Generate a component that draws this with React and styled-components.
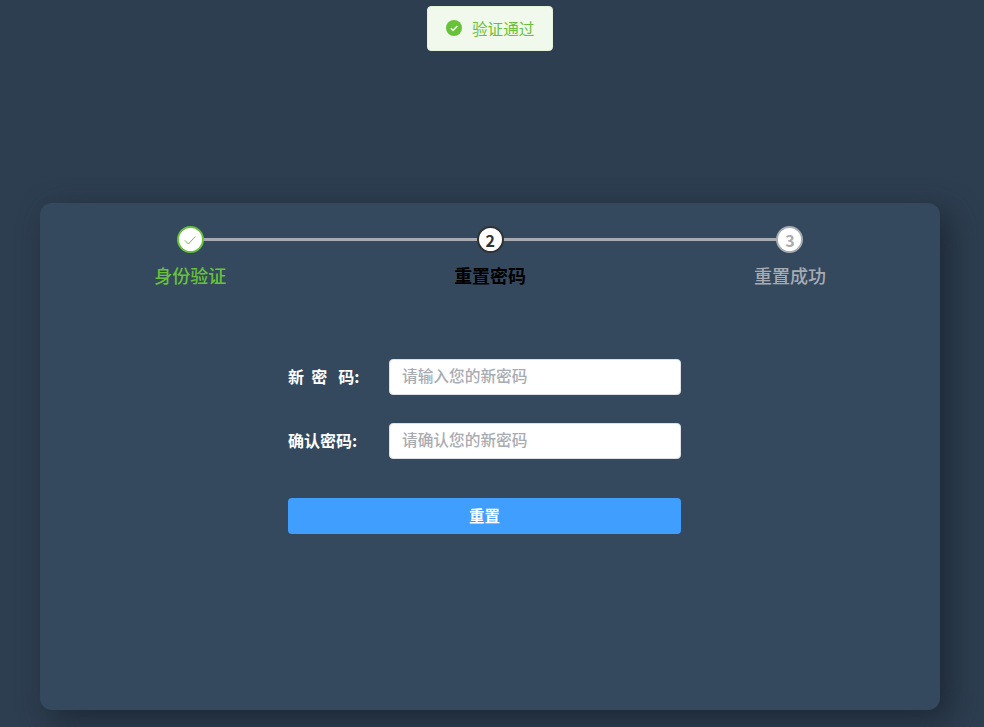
import React from 'react'
import styled, { createGlobalStyle } from 'styled-components'

const Global = createGlobalStyle`
  html, body {
    margin: 0;
    padding: 0;
    background: #2d3e50;
  }
  * {
    box-sizing: border-box;
  }
`

const Page = styled.div`
  min-height: 727px;
  height: 100vh;
  overflow: hidden;
  padding: 203px 44px 0 40px;
  background: #2d3e50;
  font-family: "Noto Sans CJK SC", "Noto Sans", sans-serif;
`

const Toast = styled.div`
  position: fixed;
  top: 6px;
  left: 427px;
  width: 126px;
  height: 45px;
  display: flex;
  align-items: center;
  gap: 10px;
  padding: 0 0 2px 18px;
  background: #f0f9eb;
  border: 1px solid #e1f3d8;
  border-radius: 4px;
  color: #67c23a;
  font-size: 15.6px;
`

const Card = styled.div`
  width: 900px;
  height: 507px;
  background: #34495e;
  border-radius: 12px;
  box-shadow: 10px 10px 30px rgba(28, 38, 50, 0.9);
`

const Steps = styled.div`
  display: flex;
  padding: 23px 0 0 0.45px;
`

const Step = styled.div`
  position: relative;
  width: 299.8px;
  display: flex;
  flex-direction: column;
  align-items: center;
`

const StepLine = styled.div`
  position: absolute;
  top: 12px;
  left: 50%;
  width: 100%;
  height: 3px;
  background: #a8abb2;
`

const StepCircle = styled.div`
  position: relative;
  width: 27px;
  height: 27px;
  display: flex;
  align-items: center;
  justify-content: center;
  border: 2px solid ${({ $color }) => $color};
  border-radius: 50%;
  background: #fff;
  color: ${({ $color }) => $color};
  font-size: 16px;
  font-weight: 700;
  line-height: 1;
`

const StepTitle = styled.div`
  margin-top: 3px;
  font-size: 18px;
  line-height: 38px;
  font-weight: ${({ $active }) => ($active ? 700 : 500)};
  color: ${({ $color }) => $color};
`

const Form = styled.form`
  width: 393px;
  margin: 65px 0 0 248px;
`

const Row = styled.div`
  display: flex;
  align-items: center;
  height: 36px;
  margin-bottom: 28px;
`

const Label = styled.label`
  width: 101px;
  padding-bottom: 2px;
  color: #fff;
  font-size: 16px;
  font-weight: 700;
  white-space: pre;
`

const Input = styled.input`
  width: 292px;
  height: 36px;
  padding: 0 11px 4px 12px;
  border: 1px solid #dcdfe6;
  border-radius: 4px;
  background: #fff;
  font-family: inherit;
  font-size: 15.7px;
  font-weight: 500;
  outline: none;
  &::placeholder {
    color: #a8abb2;
    opacity: 1;
  }
`

const Submit = styled.button`
  display: block;
  width: 100%;
  height: 36px;
  margin-top: 39px;
  padding: 0 0 2px;
  border: none;
  border-radius: 4px;
  background: #409eff;
  color: #fff;
  font-family: inherit;
  font-size: 15.4px;
  font-weight: 700;
`

const ToastIcon = () => (
  <svg width="16" height="16" viewBox="0 0 16 16">
    <circle cx="8" cy="8" r="8" fill="#67c23a" />
    <path d="M4.8 8.2 7.1 10.4 11.3 6" fill="none" stroke="#f0f9eb" strokeWidth="1.5" />
  </svg>
)

const CheckIcon = () => (
  <svg width="14" height="14" viewBox="0 0 14 14">
    <path d="M1.8 7.4 5.4 11 12.4 3.4" fill="none" stroke="#67c23a" strokeWidth="1" />
  </svg>
)

const steps = [
  { title: '身份验证', color: '#67c23a', icon: <CheckIcon /> },
  { title: '重置密码', color: '#303133', icon: 2, titleColor: '#000', active: true },
  { title: '重置成功', color: '#a8abb2', icon: 3 },
]

const App = () => {
  return (
    <Page>
      <Global />
      <Toast>
        <ToastIcon />
        <span>验证通过</span>
      </Toast>
      <Card>
        <Steps>
          {steps.map((s, i) => (
            <Step key={s.title}>
              {i < steps.length - 1 && <StepLine />}
              <StepCircle $color={s.color}>{s.icon}</StepCircle>
              <StepTitle $color={s.titleColor || s.color} $active={s.active}>{s.title}</StepTitle>
            </Step>
          ))}
        </Steps>
        <Form>
          <Row>
            <Label>{'新  密   码:'}</Label>
            <Input placeholder="请输入您的新密码" />
          </Row>
          <Row>
            <Label>确认密码:</Label>
            <Input placeholder="请确认您的新密码" />
          </Row>
          <Submit type="button">重置</Submit>
        </Form>
      </Card>
    </Page>
  )
}

export default App
